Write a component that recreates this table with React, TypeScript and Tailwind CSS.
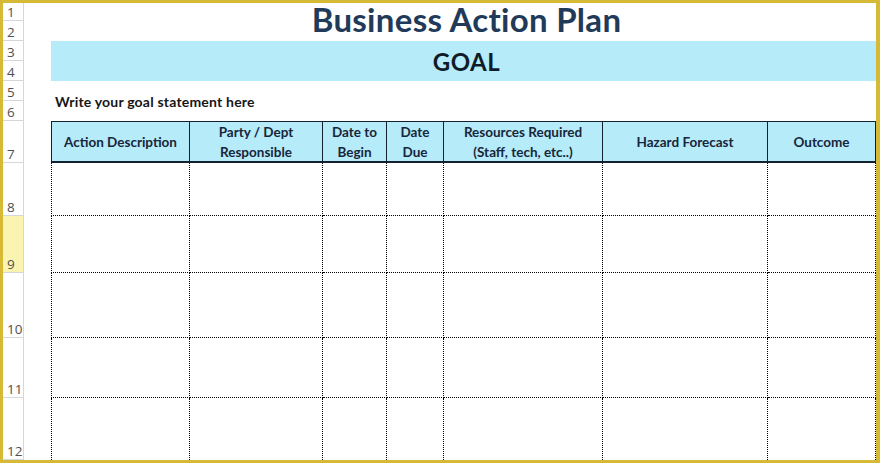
const headers = [
  ["Action Description"],
  ["Party / Dept", "Responsible"],
  ["Date to", "Begin"],
  ["Date", "Due"],
  ["Resources Required", "(Staff, tech, etc..)"],
  ["Hazard Forecast"],
  ["Outcome"],
];

const bodyRows = [
  { n: 8, row: "row-[8]" },
  { n: 9, row: "row-[9]", hl: true },
  { n: 10, row: "row-[10]" },
  { n: 11, row: "row-[11]" },
  { n: 12, row: "row-[12]" },
];

const colStart = [
  "col-[3]",
  "col-[4]",
  "col-[5]",
  "col-[6]",
  "col-[7]",
  "col-[8]",
  "col-[9]",
];

const numCell =
  "col-[1] flex items-end pl-[4px] pb-[1px] text-[13.5px] leading-none text-[#505050] border-r border-b border-[#d4d7dc] [font-family:'Open_Sans',sans-serif]";

export default function App() {
  return (
    <div
      className="w-[880px] h-[463px] overflow-hidden bg-white border-t-[3px] border-l-[3px] border-r-[4px] border-b-[3px] border-[#d6b935]"
      style={{ fontFamily: "Lato, 'Open Sans', sans-serif" }}
    >
      <div className="grid h-full grid-cols-[21px_27px_139px_133px_64px_57px_159px_165px_1fr] grid-rows-[18px_20px_20px_20px_20px_20px_42px_53px_57px_65px_60px_1fr]">
        {/* row numbers 1-7 */}
        <div className={`${numCell} row-[1]`}>1</div>
        <div className={`${numCell} row-[2]`}>2</div>
        <div className={`${numCell} row-[3]`}>3</div>
        <div className={`${numCell} row-[4]`}>4</div>
        <div className={`${numCell} row-[5]`}>5</div>
        <div className={`${numCell} row-[6]`}>6</div>
        <div className={`${numCell} row-[7]`}>7</div>

        {/* title */}
        <div className="col-[3/10] row-[1/3] flex items-start justify-center pl-[6px]">
          <h1 className="text-[33px] leading-[32px] font-bold text-[#213a5a] tracking-[0.3px]">
            Business Action Plan
          </h1>
        </div>

        {/* goal banner */}
        <div className="col-[3/10] row-[3/5] bg-[#b6ebf9] flex items-center justify-center pl-[6px] pt-[2px]">
          <span className="text-[24px] font-bold text-[#0f1b29] tracking-[0.5px]">GOAL</span>
        </div>

        {/* goal statement */}
        <div className="col-[3/10] row-[5/7] flex items-center pl-[4px] pt-[1px]">
          <span className="text-[14px] font-bold text-[#161616] tracking-[0.2px]">
            Write your goal statement here
          </span>
        </div>

        {/* table header */}
        {headers.map((lines, i) => (
          <div
            key={i}
            className={`${colStart[i]} row-[7] bg-[#b6ebf9] border-t border-b-2 border-r border-[#14202e] ${
              i === 0 ? "border-l" : ""
            } flex flex-col items-center justify-center text-[13.5px] leading-[20px] font-bold text-[#17263a]`}
          >
            {lines.map((l) => (
              <span key={l}>{l}</span>
            ))}
          </div>
        ))}

        {/* body rows */}
        {bodyRows.map((r) => (
          <div key={r.n} className="contents">
            <div className={`${numCell} ${r.row} ${r.hl ? "bg-[#fbf3b0]" : ""}`}>{r.n}</div>
            {colStart.map((c, i) => (
              <div
                key={c}
                className={`${c} ${r.row} border-dotted border-black border-r ${r.n === 12 ? "" : "border-b"} ${
                  i === 0 ? "border-l" : ""
                }`}
              />
            ))}
          </div>
        ))}
      </div>
    </div>
  );
}
